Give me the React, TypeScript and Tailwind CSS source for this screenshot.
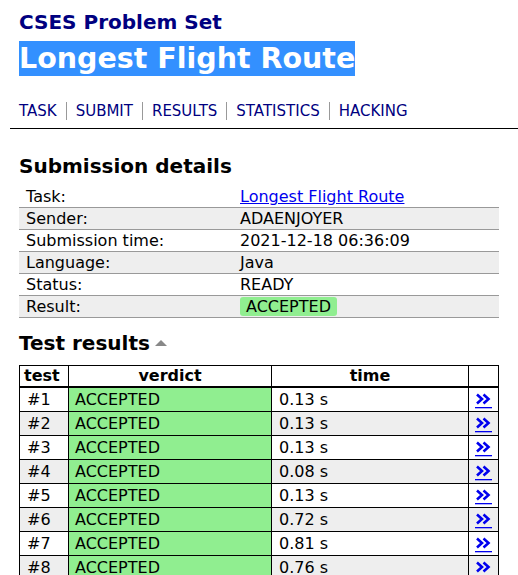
const details: [string, string][] = [
  ["Task:", "Longest Flight Route"],
  ["Sender:", "ADAENJOYER"],
  ["Submission time:", "2021-12-18 06:36:09"],
  ["Language:", "Java"],
  ["Status:", "READY"],
  ["Result:", "ACCEPTED"],
];

const tests = [
  ["#1", "0.13 s"],
  ["#2", "0.13 s"],
  ["#3", "0.13 s"],
  ["#4", "0.08 s"],
  ["#5", "0.13 s"],
  ["#6", "0.72 s"],
  ["#7", "0.81 s"],
  ["#8", "0.76 s"],
];

const nav = ["TASK", "SUBMIT", "RESULTS", "STATISTICS", "HACKING"];

function DetailLink() {
  return (
    <a className="inline-flex align-middle">
      <svg width="17" height="16" viewBox="0 0 17 16">
        <polyline points="2,1.5 7,6 2,10.5" fill="none" stroke="#0000ee" strokeWidth="2.6" />
        <polyline points="8.5,1.5 13.5,6 8.5,10.5" fill="none" stroke="#0000ee" strokeWidth="2.6" />
        <rect x="0" y="14" width="17" height="1.3" fill="#0000ee" />
      </svg>
    </a>
  );
}

export default function App() {
  return (
    <div
      className="h-[575px] overflow-hidden bg-white text-black"
      style={{ fontFamily: '"DejaVu Sans", Verdana, sans-serif' }}
    >
      <div className="pl-[10px]">
        <div className="pl-[9px] pt-[10px]">
          <div className="text-[20px] font-bold leading-[24px] text-[#000080]">
            CSES Problem Set
          </div>
          <div className="mt-[7px] h-[35px]">
            <span className="inline-block bg-[#3390ff] text-[28.5px] font-bold leading-[35px] text-white">
              Longest Flight Route
            </span>
          </div>
          <div className="mt-[26px] flex items-center text-[15px] leading-[18px] text-[#000080]">
            {nav.map((n, i) => (
              <div key={n} className="flex items-center">
                {i > 0 && <span className="mx-[9px] h-[18px] w-px bg-[#999]" />}
                <span>{n}</span>
              </div>
            ))}
          </div>
        </div>
        <div className="mt-[8px] h-px w-[600px] bg-black" />
      </div>

      <div className="px-[19px]">
        <div className="mt-[25px] text-[20px] font-bold leading-[24px]">Submission details</div>
        <table className="mt-[8px] w-[480px] border-collapse text-[16px] leading-[21px]">
          <tbody>
            {details.map(([k, v], i) => (
              <tr
                key={k}
                className={`border-b border-[#999] ${i % 2 === 1 ? "bg-[#eeeeee]" : ""}`}
              >
                <td className="w-[221px] pl-[7px] align-middle">{k}</td>
                <td className="align-middle">
                  {i === 0 ? (
                    <a className="text-[#0000ee] underline">{v}</a>
                  ) : i === 5 ? (
                    <span className="inline-block rounded-[3px] bg-[#90ee90] px-[6px] leading-[19px]">
                      {v}
                    </span>
                  ) : (
                    v
                  )}
                </td>
              </tr>
            ))}
          </tbody>
        </table>

        <div className="mt-[13px] flex items-center text-[20px] font-bold leading-[24px]">
          Test results
          <span className="ml-[5px] inline-block h-0 w-0 border-x-[6px] border-b-[6px] border-x-transparent border-b-[#888]" />
        </div>
        <table className="mt-[10px] w-[480px] border-collapse border border-black text-[16px] leading-[23px]">
          <thead>
            <tr className="border-b-2 border-black font-bold leading-[20px]">
              <th className="w-[49px] border border-black px-[4px] text-left">test</th>
              <th className="w-[203px] border border-black">verdict</th>
              <th className="w-[197px] border border-black">time</th>
              <th className="border border-black" />
            </tr>
          </thead>
          <tbody>
            {tests.map(([t, time], i) => (
              <tr key={t} className={i % 2 === 1 ? "bg-[#eeeeee]" : ""}>
                <td className="border border-black pl-[7px]">{t}</td>
                <td className="border border-black bg-[#90ee90] pl-[6px]">ACCEPTED</td>
                <td className="border border-black pl-[7px]">{time}</td>
                <td className="h-[23px] border border-black pt-[2px] text-center leading-[0]">
                  <DetailLink />
                </td>
              </tr>
            ))}
          </tbody>
        </table>
      </div>
    </div>
  );
}
